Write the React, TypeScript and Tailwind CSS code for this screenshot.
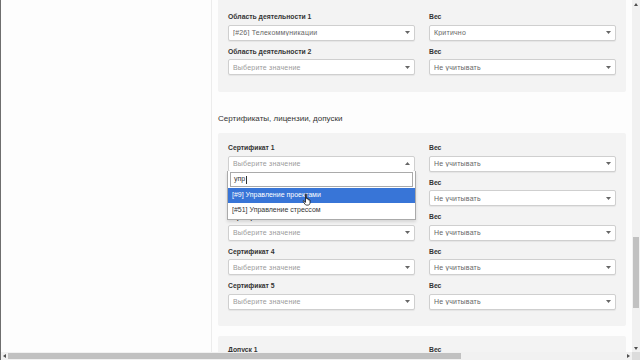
import React from 'react'

const font = { fontFamily: '"Liberation Sans", Arial, sans-serif' }

function Caret({ up }: { up?: boolean }) {
  return (
    <svg width="5" height="3" viewBox="0 0 5 3" className="shrink-0">
      <path d={up ? 'M0 3L2.5 0L5 3Z' : 'M0 0L5 0L2.5 3Z'} fill="#666" />
    </svg>
  )
}

function Select({ value, placeholder, up }: { value?: string; placeholder?: string; up?: boolean }) {
  return (
    <div className="h-[16px] bg-white border border-[#cfcfcf] rounded-[2px] shadow-[0_1px_1px_rgba(0,0,0,0.06)] flex items-center pl-[4px] pr-[4px]">
      <span className={`flex-1 truncate text-[7px] tracking-[0.2px] leading-none ${value ? 'text-[#666]' : 'text-[#9a9a9a]'}`}>
        {value ?? placeholder}
      </span>
      <Caret up={up} />
    </div>
  )
}

function Field({ label, value, up, children }: { label: string; value?: string; up?: boolean; children?: React.ReactNode }) {
  return (
    <div className="relative">
      <div className="h-[10px] text-[6.8px] leading-[10px] font-bold text-[#333] mb-[2.5px] whitespace-nowrap">{label}</div>
      <Select value={value} placeholder="Выберите значение" up={up} />
      {children}
    </div>
  )
}

function Dropdown() {
  return (
    <div className="absolute left-[-1px] right-[-1px] top-[28px] z-10 bg-white border border-[#aaa] border-t-0 px-[2px] pt-[1px] pb-[1px] shadow-[0_2px_3px_rgba(0,0,0,0.12)]">
      <div className="h-[15px] border border-[#aaa] flex items-center px-[3px] text-[7px] text-[#333]">
        упр<span className="inline-block w-px h-[8px] bg-[#333] ml-[1px]" />
      </div>
      <div className="-mx-[2px] mt-[1px] h-[15px] bg-[#3875d7] text-white text-[7px] flex items-center px-[4px] relative">
        [#9] Управление проектами
        <svg width="11" height="13" viewBox="0 0 11 13" className="absolute left-[74px] top-[5px]">
          <path d="M3.5 1.2c0-.6.9-.6.9 0v4.3c0-.6.9-.6.9 0v.6c0-.6.9-.6.9 0v.5c0-.6.9-.6.9 0v.7c0-.6.9-.6.9 0v2.6c0 1.3-.8 2.2-2.1 2.2H4.6c-.8 0-1.3-.4-1.7-1L1.2 8.3c-.3-.5.4-1 .8-.5l1.5 1.6V1.2Z" fill="#fff" stroke="#111" strokeWidth="0.8" strokeLinejoin="round" />
        </svg>
      </div>
      <div className="-mx-[2px] h-[15px] text-[#333] text-[7px] flex items-center px-[4px]">[#51] Управление стрессом</div>
    </div>
  )
}

export default function App() {
  return (
    <div className="w-[640px] h-[360px] overflow-hidden bg-white flex flex-col" style={font}>
      <div className="flex h-[352px]">
        <div className="w-px bg-[#6e6e6e]" />
        <div className="w-[211px] bg-[#fdfdfd] border-r border-[#ececec]" />
        <div className="flex-1 overflow-hidden pl-[6px] pr-[6px] bg-[#fdfdfd]">
          <div className="bg-[#f3f3f3] rounded-b-[2px] px-[10px] pt-[12px] pb-[17px] grid grid-cols-2 gap-x-[14px] gap-y-[6px]">
            <Field label="Область деятельности 1" value="[#26] Телекоммуникации" />
            <Field label="Вес" value="Критично" />
            <Field label="Область деятельности 2" />
            <Field label="Вес" value="Не учитывать" />
          </div>

          <h3 className="mt-[21px] mb-[8px] h-[12px] text-[8px] leading-[12px] text-[#333]">Сертификаты, лицензии, допуски</h3>

          <div className="bg-[#f3f3f3] rounded-[2px] px-[10px] pt-[10px] pb-[16.5px] grid grid-cols-2 gap-x-[14px] gap-y-[6px]">
            <Field label="Сертификат 1" up>
              <Dropdown />
            </Field>
            <Field label="Вес" value="Не учитывать" />
            <Field label="Сертификат 2" />
            <Field label="Вес" value="Не учитывать" />
            <Field label="Сертификат 3" />
            <Field label="Вес" value="Не учитывать" />
            <Field label="Сертификат 4" />
            <Field label="Вес" value="Не учитывать" />
            <Field label="Сертификат 5" />
            <Field label="Вес" value="Не учитывать" />
          </div>

          <div className="mt-[10px] bg-[#f3f3f3] rounded-[2px] px-[10px] pt-[9px] pb-[17px] grid grid-cols-2 gap-x-[14px]">
            <Field label="Допуск 1" />
            <Field label="Вес" value="Не учитывать" />
          </div>
        </div>
        {/* vertical scrollbar */}
        <div className="w-[8px] bg-[#f1f1f1] flex flex-col items-center">
          <div className="h-[8px] flex items-center justify-center">
            <svg width="4" height="3" viewBox="0 0 4 3"><path d="M0 3L2 0L4 3Z" fill="#505050" /></svg>
          </div>
          <div className="h-[229px]" />
          <div className="w-[6px] h-[71px] bg-[#c1c1c1]" />
          <div className="flex-1" />
          <div className="h-[8px] flex items-center justify-center">
            <svg width="4" height="3" viewBox="0 0 4 3"><path d="M0 0L4 0L2 3Z" fill="#505050" /></svg>
          </div>
        </div>
      </div>
      {/* horizontal scrollbar */}
      <div className="h-[8px] flex bg-[#f1f1f1]">
        <div className="w-px bg-[#6e6e6e]" />
        <div className="w-[7px] flex items-center justify-center">
          <svg width="3" height="4" viewBox="0 0 3 4"><path d="M3 0L0 2L3 4Z" fill="#505050" /></svg>
        </div>
        <div className="w-[453px] my-[1px] bg-[#c1c1c1]" />
        <div className="flex-1" />
        <div className="w-[8px] flex items-center justify-center">
          <svg width="3" height="4" viewBox="0 0 3 4"><path d="M0 0L3 2L0 4Z" fill="#505050" /></svg>
        </div>
        <div className="w-[8px] bg-[#dcdcdc]" />
      </div>
    </div>
  )
}
